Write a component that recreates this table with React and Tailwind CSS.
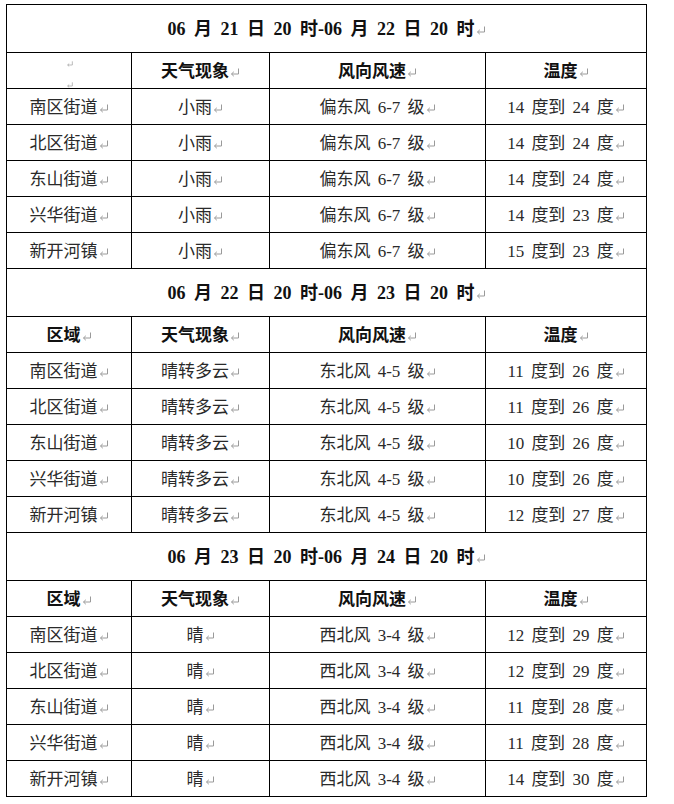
const periods = [
  {
    title: "06 月 21 日 20 时-06 月 22 日 20 时",
    blankHead: true,
    rows: [
      ["南区街道", "小雨", "偏东风 6-7 级", "14 度到 24 度"],
      ["北区街道", "小雨", "偏东风 6-7 级", "14 度到 24 度"],
      ["东山街道", "小雨", "偏东风 6-7 级", "14 度到 24 度"],
      ["兴华街道", "小雨", "偏东风 6-7 级", "14 度到 23 度"],
      ["新开河镇", "小雨", "偏东风 6-7 级", "15 度到 23 度"],
    ],
  },
  {
    title: "06 月 22 日 20 时-06 月 23 日 20 时",
    rows: [
      ["南区街道", "晴转多云", "东北风 4-5 级", "11 度到 26 度"],
      ["北区街道", "晴转多云", "东北风 4-5 级", "11 度到 26 度"],
      ["东山街道", "晴转多云", "东北风 4-5 级", "10 度到 26 度"],
      ["兴华街道", "晴转多云", "东北风 4-5 级", "10 度到 26 度"],
      ["新开河镇", "晴转多云", "东北风 4-5 级", "12 度到 27 度"],
    ],
  },
  {
    title: "06 月 23 日 20 时-06 月 24 日 20 时",
    rows: [
      ["南区街道", "晴", "西北风 3-4 级", "12 度到 29 度"],
      ["北区街道", "晴", "西北风 3-4 级", "12 度到 29 度"],
      ["东山街道", "晴", "西北风 3-4 级", "11 度到 28 度"],
      ["兴华街道", "晴", "西北风 3-4 级", "11 度到 28 度"],
      ["新开河镇", "晴", "西北风 3-4 级", "14 度到 30 度"],
    ],
  },
];

// Word paragraph mark
const Mark = () => (
  <svg width="10" height="9" viewBox="0 0 10 9" className="inline-block ml-[1px] align-baseline">
    <path d="M8.5 0.5 V6 H1.5 M3.8 3.8 L1.5 6 L3.8 8.2" fill="none" stroke="#9a9a9a" strokeWidth="1" />
  </svg>
);

const Cell = ({ children, bold }) => (
  <td className={`border border-black text-center p-0 pt-[2px] ${bold ? "font-bold text-[#111]" : "font-normal"}`}>
    <span className="whitespace-nowrap [word-spacing:3px]">
      {children}
      <Mark />
    </span>
  </td>
);

const Header = ({ blank }) => (
  <tr className="h-[36px]">
    {blank ? (
      <td className="border border-black p-0 align-top">
        <div className="h-[35px] overflow-hidden flex flex-col items-center pt-[8px] gap-[15px]">
          <Mark />
          <Mark />
        </div>
      </td>
    ) : (
      <Cell bold>区域</Cell>
    )}
    <Cell bold>天气现象</Cell>
    <Cell bold>风向风速</Cell>
    <Cell bold>温度</Cell>
  </tr>
);

export default function App() {
  return (
    <div
      className="bg-white w-[674px] h-[804px] pt-[4px] pl-[6px] text-[#2a2a2a] text-[17px] leading-none"
      style={{ fontFamily: '"Liberation Serif", "Noto Sans CJK SC", serif' }}
    >
      <table className="border-collapse table-fixed w-[640px]">
        <colgroup>
          <col className="w-[125px]" />
          <col className="w-[138px]" />
          <col className="w-[216px]" />
          <col className="w-[161px]" />
        </colgroup>
        <tbody>
          {periods.map((p, i) => (
            <>
              <tr key={`t${i}`} className="h-[48px]">
                <td colSpan={4} className="border border-black text-center p-0 font-bold text-[18px] text-[#111]">
                  <span className="whitespace-nowrap [word-spacing:4px]">
                    {p.title}
                    <Mark />
                  </span>
                </td>
              </tr>
              <Header key={`h${i}`} blank={p.blankHead} />
              {p.rows.map((r, j) => (
                <tr key={`r${i}-${j}`} className="h-[36px]">
                  {r.map((c, k) => (
                    <Cell key={k}>{c}</Cell>
                  ))}
                </tr>
              ))}
            </>
          ))}
        </tbody>
      </table>
    </div>
  );
}
